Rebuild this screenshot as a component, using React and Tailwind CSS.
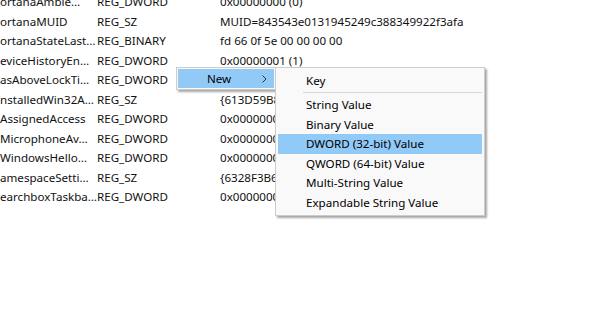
const rows = [
  ['ortanaAmbie…', 'REG_DWORD', '0x00000000 (0)'],
  ['ortanaMUID', 'REG_SZ', 'MUID=843543e0131945249c388349922f3afa'],
  ['ortanaStateLast…', 'REG_BINARY', 'fd 66 0f 5e 00 00 00 00'],
  ['eviceHistoryEn…', 'REG_DWORD', '0x00000001 (1)'],
  ['asAboveLockTi…', 'REG_DWORD', '0x00000001 (1)'],
  ['nstalledWin32A…', 'REG_SZ', '{613D59B8-1E2A-4C3D}'],
  ['AssignedAccess', 'REG_DWORD', '0x00000000 (0)'],
  ['MicrophoneAv…', 'REG_DWORD', '0x00000000 (0)'],
  ['WindowsHello…', 'REG_DWORD', '0x00000000 (0)'],
  ['amespaceSetti…', 'REG_SZ', '{6328F3B6-0A4F-4E1E}'],
  ['earchboxTaskba…', 'REG_DWORD', '0x00000000 (0)'],
]

const items = ['String Value', 'Binary Value', 'DWORD (32-bit) Value', 'QWORD (64-bit) Value', 'Multi-String Value', 'Expandable String Value']

export default function App() {
  return (
    <div className="relative w-[600px] h-[328px] overflow-hidden bg-white text-[11.6px] text-[#111] font-['Noto_Sans','Open_Sans',sans-serif]">
      {/* Value list */}
      <div className="-mt-[8px] flex flex-col">
        {rows.map(([name, type, data], i) => (
          <div key={i} className="flex h-[19.5px] items-center whitespace-nowrap">
            <div className="w-[97px] shrink-0 overflow-hidden">{name}</div>
            <div className="w-[123px] shrink-0">{type}</div>
            <div>{data}</div>
          </div>
        ))}
      </div>

      {/* Context menu */}
      <div className="absolute left-[176px] top-[67px] w-[100px] h-[23px] bg-[#f9f9f9] border border-[#cccccc] p-px shadow-[2px_2px_2px_rgba(0,0,0,0.35)]">
        <div className="flex h-full items-center justify-between bg-[#91c9f7] pl-[29px] pr-[7px] text-black">
          <span>New</span>
          <svg width="5" height="8" viewBox="0 0 5 8" className="text-[#333]">
            <path d="M0.5 0.5 L4 4 L0.5 7.5" fill="none" stroke="currentColor" strokeWidth="1" />
          </svg>
        </div>
      </div>

      {/* Submenu */}
      <div className="absolute left-[275px] top-[67px] w-[210px] bg-[#f9f9f9] border border-[#cccccc] p-[2px] text-black shadow-[2px_2px_2px_rgba(0,0,0,0.35)]">
        <div className="flex h-[20px] items-center pl-[28px] pt-px">Key</div>
        <div className="flex h-[5px] items-center pl-[25px]">
          <div className="h-px w-full bg-[#d7d7d7]" />
        </div>
        {items.map((label) => (
          <div
            key={label}
            className={`flex h-[19.6px] items-center pl-[28px] ${label.startsWith('DWORD') ? 'bg-[#91c9f7]' : ''}`}
          >
            {label}
          </div>
        ))}
      </div>
    </div>
  )
}
